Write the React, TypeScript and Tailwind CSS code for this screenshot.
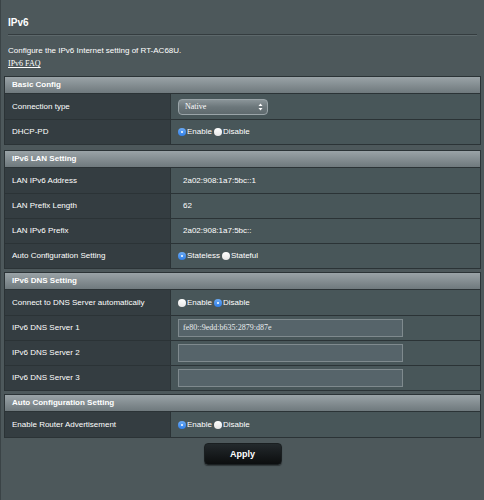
import React from "react";

const sans = { fontFamily: '"Liberation Sans", Arial, sans-serif' };
const serif = { fontFamily: '"Liberation Serif", "Times New Roman", serif' };

function Radio({ checked, label }: { checked: boolean; label: string }) {
  return (
    <span className="inline-flex items-center mr-[2px]">
      {checked ? (
        <span className="w-[8px] h-[8px] rounded-full bg-gradient-to-b from-[#6aaaf5] to-[#2f7fe8] flex items-center justify-center">
          <span className="w-[2px] h-[2px] rounded-full bg-white" />
        </span>
      ) : (
        <span className="w-[8px] h-[8px] rounded-full bg-gradient-to-b from-[#ffffff] to-[#e6e6e6]" />
      )}
      <span className="ml-[1px] text-white">{label}</span>
    </span>
  );
}

function Row({ label, children, first }: { label: string; children?: React.ReactNode; first?: boolean }) {
  return (
    <div className={"flex h-[25px] " + (first ? "" : "border-t border-[#2b3336]")}>
      <div className="w-[166px] shrink-0 bg-[#343d41] border-r border-[#2b3336] flex items-center pl-[7px] text-white">
        {label}
      </div>
      <div className="flex-1 bg-[#485659] flex items-center pl-[7px] text-white">{children}</div>
    </div>
  );
}

function Section({ title, children, className }: { title: string; children: React.ReactNode; className?: string }) {
  return (
    <div className={"border border-[#2b3336] " + (className ?? "")}>
      <div className="h-[17px] bg-gradient-to-b from-[#9aa3a7] to-[#6f797d] border-b border-[#2b3336] flex items-center pl-[7px] text-white font-bold">
        {title}
      </div>
      {children}
    </div>
  );
}

function TextBox({ value }: { value?: string }) {
  return (
    <div
      className="w-[225px] h-[18px] bg-[#56646a] border border-[#7f8a8e] flex items-center pl-[4px] text-[8px] text-[#e8ecee]"
      style={serif}
    >
      {value}
    </div>
  );
}

export default function App() {
  return (
    <div className="w-[484px] h-[500px] bg-[#4d585b] border-l border-[#3a4346] text-[8px] leading-[10px] overflow-hidden" style={sans}>
      <div className="pt-[17px] px-[7px]">
        <div className="text-[10px] leading-[12px] font-bold text-white">IPv6</div>
        <div className="mt-[5px] h-px bg-[#343c3f]" />
        <div className="h-px bg-[#5d686b]" />
        <div className="mt-[10px] text-white">Configure the IPv6 Internet setting of RT-AC68U.</div>
        <div className="mt-[3px] text-white underline" style={serif}>
          IPv6 FAQ
        </div>
      </div>
      <div className="mt-[7px] mx-[3px] w-[477px]">
        <Section title="Basic Config">
          <Row label="Connection type" first>
            <div
              className="w-[90px] h-[16px] rounded-[4px] border border-[#9aa4a8] bg-gradient-to-b from-[#8a9498] via-[#6c777b] to-[#5f6a6e] flex items-center justify-between pl-[6px] pr-[4px] text-white"
              style={serif}
            >
              <span>Native</span>
              <svg width="5" height="8" viewBox="0 0 5 8">
                <path d="M2.5 0.5 L4.5 3 H0.5 Z" fill="#fff" />
                <path d="M2.5 7.5 L4.5 5 H0.5 Z" fill="#fff" />
              </svg>
            </div>
          </Row>
          <Row label="DHCP-PD">
            <Radio checked label="Enable" />
            <Radio checked={false} label="Disable" />
          </Row>
        </Section>
        <Section title="IPv6 LAN Setting" className="mt-[5px]">
          <Row label="LAN IPv6 Address" first>
            <span className="pl-[5px]">2a02:908:1a7:5bc::1</span>
          </Row>
          <Row label="LAN Prefix Length">
            <span className="pl-[5px]">62</span>
          </Row>
          <Row label="LAN IPv6 Prefix">
            <span className="pl-[5px]">2a02:908:1a7:5bc::</span>
          </Row>
          <Row label="Auto Configuration Setting">
            <Radio checked label="Stateless" />
            <Radio checked={false} label="Stateful" />
          </Row>
        </Section>
        <Section title="IPv6 DNS Setting" className="mt-[3px]">
          <Row label="Connect to DNS Server automatically" first>
            <Radio checked={false} label="Enable" />
            <Radio checked label="Disable" />
          </Row>
          <Row label="IPv6 DNS Server 1">
            <TextBox value="fe80::9edd:b635:2879:d87e" />
          </Row>
          <Row label="IPv6 DNS Server 2">
            <TextBox />
          </Row>
          <Row label="IPv6 DNS Server 3">
            <TextBox />
          </Row>
        </Section>
        <Section title="Auto Configuration Setting" className="mt-[3px]">
          <Row label="Enable Router Advertisement" first>
            <Radio checked label="Enable" />
            <Radio checked={false} label="Disable" />
          </Row>
        </Section>
        <div className="flex justify-center mt-[5px]">
          <button className="w-[78px] h-[22px] rounded-[4px] bg-gradient-to-b from-[#23292c] to-[#0c0e0f] border border-[#1a1f21] shadow-[0_1px_1px_rgba(0,0,0,0.4)] text-white font-bold text-[9px]">
            Apply
          </button>
        </div>
      </div>
    </div>
  );
}
